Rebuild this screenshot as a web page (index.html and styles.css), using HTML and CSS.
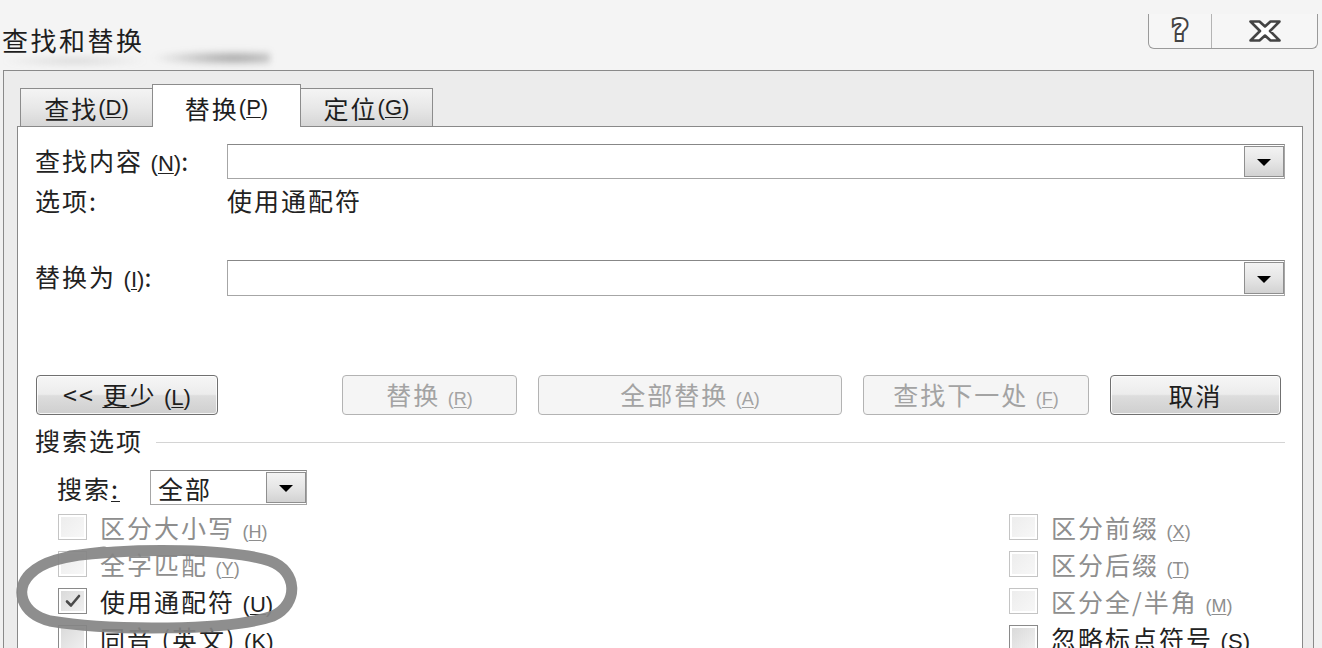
FILE: index.html
```html
<!DOCTYPE html>
<html lang="zh-CN">
<head>
<meta charset="utf-8">
<title>查找和替换</title>
<link rel="stylesheet" href="styles.css">
</head>
<body>
<div class="screen">
  <header class="titlebar">
    <div class="smudge"></div>
    <div class="smudge faint"></div>
    <h1 class="title">查找和替换</h1>
    <div class="caption-btns">
      <div class="cap help"><span class="help-glyph">?</span></div>
      <div class="cap close">
        <svg width="34" height="24" viewBox="0 0 34 24"><path d="M2.5 2.5H11.5L17 7.5L22.5 2.5H31.5L22 12L31.5 21.5H22.5L17 16.5L11.5 21.5H2.5L12 12Z" fill="#fff" stroke="#444" stroke-width="2.6" stroke-linejoin="round"/></svg>
      </div>
    </div>
  </header>

  <div class="window">
    <div class="tabs">
      <div class="tab">查找 <span class="acc">(<u>D</u>)</span></div>
      <div class="tab active">替换 <span class="acc">(<u>P</u>)</span></div>
      <div class="tab">定位 <span class="acc">(<u>G</u>)</span></div>
    </div>

    <div class="panel">
      <div class="field-row">
        <span class="lbl">查找内容 <span class="acc">(<u>N</u>)</span>:</span>
        <div class="combo"><div class="drop"><i class="arrow"></i></div></div>
      </div>
      <div class="opt-row">
        <span class="lbl">选项:</span>
        <span>使用通配符</span>
      </div>
      <div class="field-row row2">
        <span class="lbl">替换为 <span class="acc">(<u>I</u>)</span>:</span>
        <div class="combo"><div class="drop"><i class="arrow"></i></div></div>
      </div>

      <div class="btn-row">
        <button class="btn more">&lt;&lt; <u>更</u>少 <span class="acc">(<u>L</u>)</span></button>
        <div class="btn-group">
          <button class="btn disabled w-replace">替换 <span class="acc sm">(<u>R</u>)</span></button>
          <button class="btn disabled w-all">全部替换 <span class="acc sm">(<u>A</u>)</span></button>
          <button class="btn disabled w-next">查找下一处 <span class="acc sm">(<u>F</u>)</span></button>
          <button class="btn w-cancel">取消</button>
        </div>
      </div>

      <div class="group-title">
        <span>搜索选项</span>
        <span class="rule"></span>
      </div>

      <div class="search-row">
        <span class="lbl2">搜索<u>:</u></span>
        <div class="select">
          <span class="sel-text">全部</span>
          <div class="drop"><i class="arrow"></i></div>
        </div>
      </div>

      <div class="checks">
        <div class="col left">
          <div class="chk off"><span class="box"></span><span>区分大小写 <span class="acc sm">(<u>H</u>)</span></span></div>
          <div class="chk off"><span class="box"></span><span>全字匹配 <span class="acc sm">(<u>Y</u>)</span></span></div>
          <div class="chk"><span class="box checked"><svg width="16" height="14" viewBox="0 0 16 14"><path d="M2 7.5L6 11.5L14 2" fill="none" stroke="#4a4a4a" stroke-width="2.6" stroke-linecap="round" stroke-linejoin="round"/></svg></span><span>使用通配符 <span class="acc">(<u>U</u>)</span></span></div>
          <div class="chk"><span class="box"></span><span>同音 (英文) <span class="acc">(<u>K</u>)</span></span></div>
        </div>
        <div class="col right">
          <div class="chk off"><span class="box"></span><span>区分前缀 <span class="acc sm">(<u>X</u>)</span></span></div>
          <div class="chk off"><span class="box"></span><span>区分后缀 <span class="acc sm">(<u>T</u>)</span></span></div>
          <div class="chk off"><span class="box"></span><span>区分全/半角 <span class="acc sm">(<u>M</u>)</span></span></div>
          <div class="chk"><span class="box"></span><span>忽略标点符号 <span class="acc">(<u>S</u>)</span></span></div>
        </div>
      </div>
    </div>
  </div>

  <svg class="ink" width="1322" height="648" viewBox="0 0 1322 648">
    <path d="M70 556C140 547 232 549 270 561C298 571 299 604 273 616C230 631 110 631 50 621C20 613 15 589 30 574C42 562 62 556 104 552" fill="none" stroke="#858585" stroke-width="11" stroke-linecap="round" stroke-linejoin="round"/>
  </svg>
</div>
</body>
</html>
```

FILE: styles.css
```css
* { box-sizing: border-box; }

html, body {
  margin: 0;
  padding: 0;
}

body {
  width: 1322px;
  height: 648px;
  overflow: hidden;
  background: #f1f1f1;
  font-family: "Noto Sans CJK SC", "Liberation Sans", sans-serif;
  color: #222;
}

.screen {
  position: relative;
  width: 1322px;
  height: 648px;
}

u { text-decoration: underline; text-underline-offset: 2px; text-decoration-thickness: 1px; }

/* ---------- title bar ---------- */
.titlebar {
  position: relative;
  height: 70px;
  display: flex;
  justify-content: space-between;
  align-items: flex-start;
  background: #f4f4f4;
}

.smudge {
  position: absolute;
  left: 150px;
  top: 50px;
  width: 120px;
  height: 16px;
  background: radial-gradient(ellipse at 70% 50%, rgba(90, 90, 90, 0.55), rgba(90, 90, 90, 0) 70%);
  filter: blur(3px);
}

.smudge.faint {
  left: 0;
  top: 56px;
  width: 150px;
  height: 10px;
  background: radial-gradient(ellipse, rgba(120, 120, 120, 0.25), rgba(120, 120, 120, 0) 70%);
}

.title {
  margin: 25px 0 0 2px;
  font-size: 26px;
  line-height: 30px;
  font-weight: 400;
  letter-spacing: 2.5px;
  color: #1e1e1e;
}

.caption-btns {
  margin: 14px 4px 0 0;
  width: 170px;
  height: 35px;
  display: flex;
  border: 1px solid #9a9a9a;
  border-top: none;
  border-radius: 0 0 6px 6px;
  background: #f6f6f6;
}

.cap {
  display: flex;
  align-items: center;
  justify-content: center;
}

.cap.help {
  width: 63px;
  border-right: 1px solid #b4b4b4;
}

.cap.close { flex: 1; }

.help-glyph {
  font-family: "DejaVu Sans", sans-serif;
  font-weight: 700;
  font-size: 28px;
  line-height: 30px;
  color: #fff;
  -webkit-text-stroke: 4px #444;
  paint-order: stroke fill;
}

/* ---------- window ---------- */
.window {
  margin-left: 3px;
  width: 1311px;
  height: 578px;
  border: 1px solid #8a8a8a;
  border-bottom: none;
  background: #ececec;
  padding: 13px 10px 0 13px;
  display: flex;
  flex-direction: column;
}

.tabs {
  display: flex;
  align-items: flex-end;
  height: 42px;
  padding-left: 3px;
}

.tab {
  height: 38px;
  width: 133px;
  display: flex;
  align-items: center;
  justify-content: center;
  border: 1px solid #8c8c8c;
  border-bottom: none;
  background: linear-gradient(#f4f4f4, #e8e8e8 50%, #d6d6d6);
  font-size: 25px;
  letter-spacing: 2px;
  color: #1e1e1e;
  margin-left: -1px;
}

.tab:first-child { margin-left: 0; }

.tab.active {
  position: relative;
  z-index: 1;
  height: 43px;
  width: 149px;
  margin-bottom: -1px;
  padding-top: 4px;
  background: #fff;
}

.acc {
  font-family: "Liberation Sans", sans-serif;
  font-size: 22px;
  letter-spacing: 0;
}

.acc.sm { font-size: 18px; }

.panel {
  flex: 1;
  background: #fff;
  border: 1px solid #898989;
  padding: 17px 17px 0 17px;
  font-size: 25px;
  letter-spacing: 2px;
}

.field-row {
  display: flex;
  align-items: center;
  height: 35px;
}

.field-row.row2 {
  margin-top: 46px;
  height: 36px;
}

.lbl {
  width: 192px;
  flex: none;
  line-height: 28px;
}

.opt-row {
  display: flex;
  align-items: center;
  margin-top: 7px;
  height: 28px;
}

.combo {
  flex: 1;
  height: 100%;
  display: flex;
  justify-content: flex-end;
  padding: 1px 0 1px 0;
  border: 1px solid #a6a6a6;
  border-top-color: #878787;
  background: #fff;
}

.drop {
  width: 40px;
  height: 100%;
  display: flex;
  align-items: center;
  justify-content: center;
  border: 1px solid #8f8f8f;
  background: linear-gradient(#f3f3f3, #e6e6e6 50%, #d2d2d2);
}

.arrow {
  width: 0;
  height: 0;
  border-left: 7px solid transparent;
  border-right: 7px solid transparent;
  border-top: 7px solid #000;
  margin-top: 2px;
}

/* ---------- buttons ---------- */
.btn-row {
  display: flex;
  align-items: stretch;
  margin-top: 79px;
  height: 40px;
}

.btn {
  height: 40px;
  padding: 0;
  font-family: inherit;
  font-size: 25px;
  letter-spacing: 2px;
  color: #1e1e1e;
  border: 1px solid #707070;
  border-radius: 4px;
  background: linear-gradient(#f6f6f6, #ececec 48%, #dddddd 52%, #cfcfcf);
  box-shadow: inset 0 0 0 1px rgba(255, 255, 255, 0.8);
  line-height: 36px;
}

.btn.more { width: 182px; margin-left: 1px; }

.btn-group {
  margin-left: auto;
  margin-right: 4px;
  display: flex;
  gap: 21px;
}

.btn.disabled {
  color: #a3a3a3;
  border-color: #b3b3b3;
  background: #f5f5f5;
  box-shadow: none;
}

.w-replace { width: 175px; }
.w-all { width: 304px; }
.w-next { width: 226px; }
.w-cancel { width: 171px; }

/* ---------- search options ---------- */
.group-title {
  display: flex;
  align-items: center;
  margin-top: 12px;
  height: 26px;
  line-height: 26px;
}

.rule {
  flex: 1;
  height: 1px;
  margin-left: 13px;
  margin-top: 4px;
  background: #d4d4d4;
}

.search-row {
  display: flex;
  align-items: center;
  margin-top: 17px;
  height: 35px;
  padding-left: 22px;
}

.lbl2 {
  width: 93px;
  flex: none;
}

.select {
  width: 157px;
  height: 35px;
  display: flex;
  align-items: center;
  padding: 1px 0 1px 7px;
  border: 1px solid #a6a6a6;
  border-top-color: #878787;
}

.sel-text { flex: 1; }

.checks {
  display: flex;
  margin-top: 3px;
}

.col { display: flex; flex-direction: column; }

.col.left {
  flex: 1;
  padding-left: 23px;
}

.col.right { width: 276px; }

.chk {
  height: 37px;
  display: flex;
  align-items: center;
  white-space: nowrap;
}

.chk .box {
  width: 29px;
  height: 26px;
  flex: none;
  margin-right: 13px;
  border: 1px solid #8a8a8a;
  background: linear-gradient(135deg, #d8d8d8, #f2f2f2);
  box-shadow: inset 0 0 0 2px #fff;
  display: flex;
  align-items: center;
  justify-content: center;
}

.chk.off { color: #8e8e8e; }

.chk.off .box {
  border-color: #c4c4c4;
  background: linear-gradient(135deg, #ececec, #f8f8f8);
}

/* ---------- ink circle overlay ---------- */
.ink {
  position: absolute;
  left: 0;
  top: 0;
  pointer-events: none;
  opacity: 0.92;
}
```
